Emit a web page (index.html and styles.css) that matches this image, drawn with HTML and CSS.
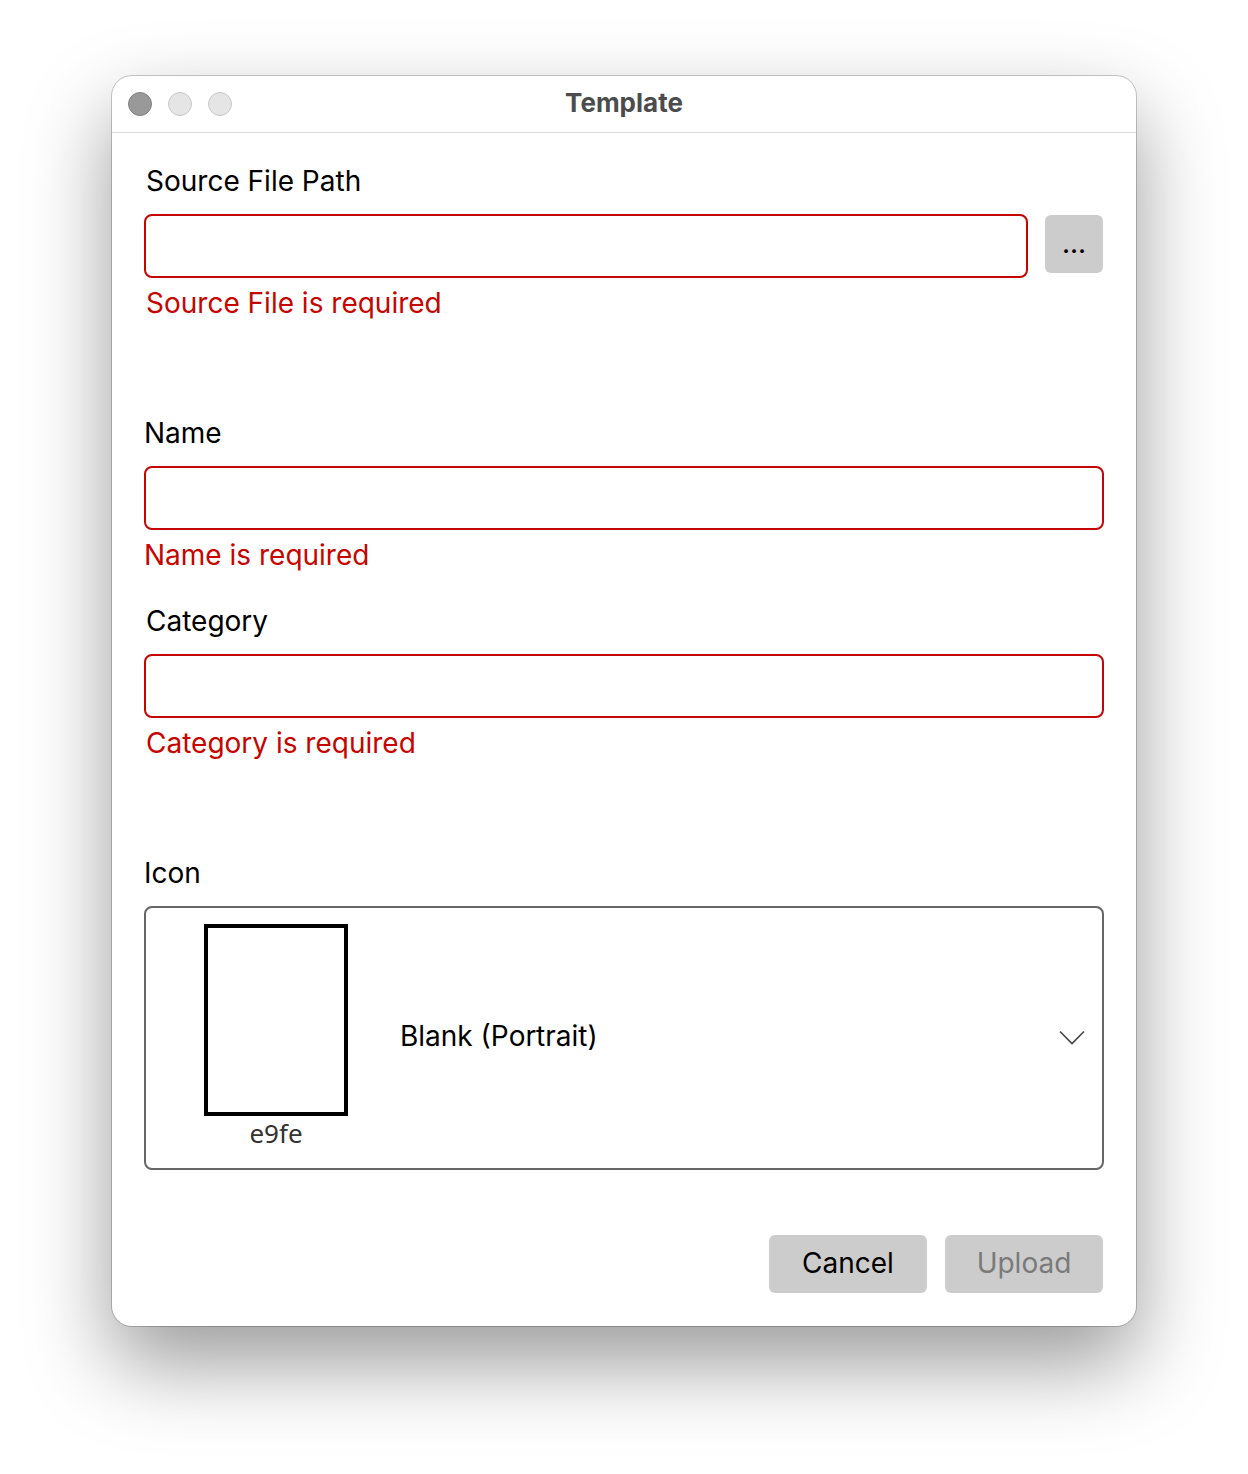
FILE: index.html
```html
<!DOCTYPE html>
<html lang="en">
<head>
<meta charset="utf-8">
<meta name="viewport" content="width=device-width, initial-scale=1">
<title>Template</title>
<link rel="stylesheet" href="styles.css">
</head>
<body>
<main class="window">
  <header class="titlebar">
    <div class="lights">
      <button class="light light-close" type="button" aria-label="Close"></button>
      <button class="light" type="button" aria-label="Minimize" disabled></button>
      <button class="light" type="button" aria-label="Zoom" disabled></button>
    </div>
    <h1 class="title">Template</h1>
  </header>
  <form class="form" novalidate>
    <div class="group">
      <div class="field">
        <label class="label indent" for="source">Source File Path</label>
        <div class="picker">
          <input class="input" id="source" type="text" aria-invalid="true" aria-describedby="source-error">
          <button class="button button-browse" type="button">...</button>
        </div>
        <p class="error indent" id="source-error">Source File is required</p>
      </div>
    </div>
    <div class="group">
      <div class="field">
        <label class="label" for="name">Name</label>
        <input class="input" id="name" type="text" aria-invalid="true" aria-describedby="name-error">
        <p class="error" id="name-error">Name is required</p>
      </div>
      <div class="field">
        <label class="label indent" for="category">Category</label>
        <input class="input" id="category" type="text" aria-invalid="true" aria-describedby="category-error">
        <p class="error indent" id="category-error">Category is required</p>
      </div>
    </div>
    <div class="group">
      <div class="field">
        <label class="label" for="icon">Icon</label>
        <div class="icon-select">
          <select class="select" id="icon">
            <option>Blank (Portrait)</option>
          </select>
          <div class="thumb" aria-hidden="true">
            <div class="page"></div>
            <span class="code">e9fe</span>
          </div>
          <svg class="chevron" width="26" height="16" viewBox="0 0 26 16" fill="none" stroke="#444" stroke-width="1.6" aria-hidden="true"><path d="M1 1.5 13 13.5 25 1.5"/></svg>
        </div>
      </div>
    </div>
    <footer class="actions">
      <button class="button" type="button">Cancel</button>
      <button class="button" type="submit" disabled>Upload</button>
    </footer>
  </form>
</main>
</body>
</html>
```
FILE: styles.css
```css
* {
  box-sizing: border-box;
}

body {
  margin: 0;
  padding: 76px 112px 148px;
  background: #fff;
  color: #000;
  font-family: Inter, "Liberation Sans", sans-serif;
  font-size: 28px;
  line-height: 34px;
}

.window {
  border-radius: 20px;
  background: #fff;
  box-shadow: 0 0 0 1px rgba(0, 0, 0, 0.2), 0 37px 84px rgba(0, 0, 0, 0.4);
}

.titlebar {
  display: grid;
  grid-template-columns: 1fr auto 1fr;
  align-items: center;
  height: 56px;
  padding: 0 16px;
  box-shadow: 0 1px 0 #dadada;
}

.lights {
  display: flex;
  gap: 16px;
}

.light {
  width: 24px;
  height: 24px;
  padding: 0;
  border: 1px solid #c8c8c8;
  border-radius: 50%;
  background: #e5e5e5;
}

.light-close {
  border-color: #828282;
  background: #999;
}

.title {
  margin: 0;
  padding-bottom: 2px;
  color: #4c4c4c;
  font-size: 26px;
  font-weight: 700;
}

.form {
  display: flex;
  flex-direction: column;
  gap: 96px;
  padding: 32px;
}

.group {
  display: flex;
  flex-direction: column;
  gap: 32px;
}

.field {
  display: flex;
  flex-direction: column;
}

.label {
  margin-bottom: 16px;
}

.error {
  margin: 8px 0 0;
  color: #c50500;
}

.indent {
  padding-left: 2px;
}

.picker {
  display: flex;
  gap: 17px;
  padding-right: 1px;
}

.input,
.select {
  width: 100%;
  border: 2px solid #c50500;
  border-radius: 8px;
  background: #fff;
  color: inherit;
  font: inherit;
}

.input {
  height: 64px;
  padding: 0 16px;
}

.button {
  flex: none;
  width: 158px;
  height: 58px;
  margin: 1px 0;
  padding: 0 0 2px;
  border: 0;
  border-radius: 6px;
  background: #ccc;
  color: #000;
  font: inherit;
}

.button:disabled {
  color: #7a7a7a;
}

.button-browse {
  width: 58px;
}

.icon-select {
  position: relative;
}

.select {
  display: block;
  height: 264px;
  padding: 0 64px 4px 254px;
  border-color: #666;
  appearance: none;
  font-kerning: none;
}

.thumb {
  position: absolute;
  top: 18px;
  left: 60px;
  display: flex;
  flex-direction: column;
  align-items: center;
  pointer-events: none;
}

.page {
  width: 144px;
  height: 192px;
  border: 4px solid #000;
}

.code {
  color: #333;
  font-family: "Noto Sans", sans-serif;
  font-size: 26px;
}

.chevron {
  position: absolute;
  top: 124px;
  right: 19px;
  pointer-events: none;
}

.actions {
  display: flex;
  justify-content: flex-end;
  gap: 18px;
  margin-top: -32px;
  padding-right: 1px;
}
```
